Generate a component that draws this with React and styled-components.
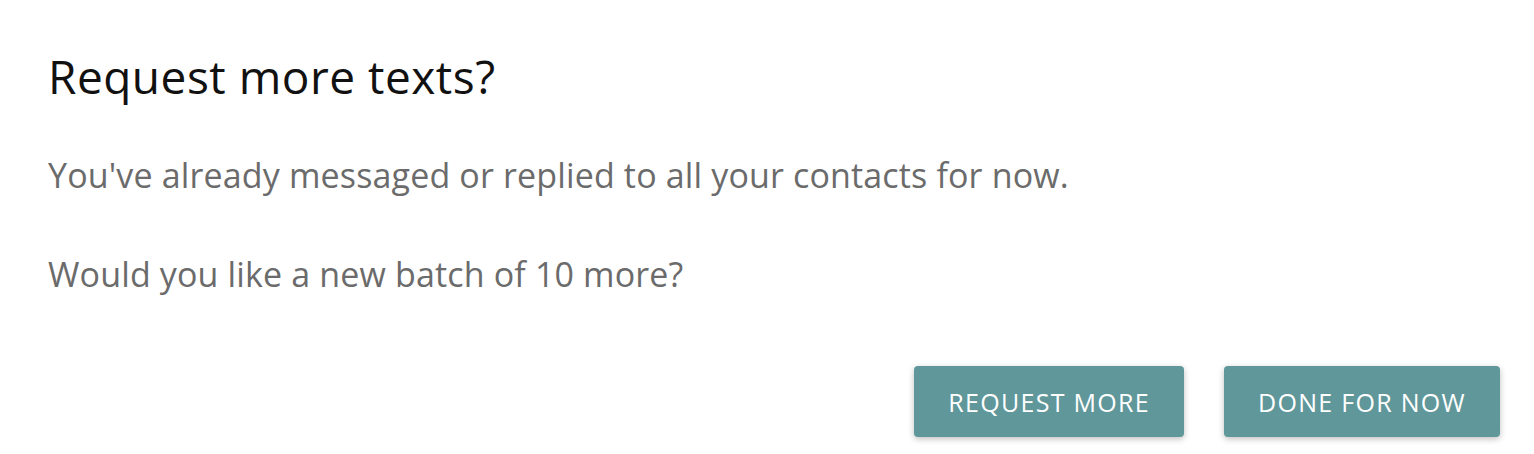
import React from "react";
import styled, { createGlobalStyle } from "styled-components";

const GlobalStyle = createGlobalStyle`
  html, body {
    margin: 0;
    padding: 0;
    background: #ffffff;
  }
  body {
    font-family: "Open Sans", "Liberation Sans", sans-serif;
  }
`;

export default function App() {
  return (
    <>
      <GlobalStyle />
      <Dialog>
        <Title>Request more texts?</Title>
        <Body>
          <Text>You've already messaged or replied to all your contacts for now.</Text>
          <Text>Would you like a new batch of 10 more?</Text>
        </Body>
        <Actions>
          <Button>Request more</Button>
          <Button>Done for now</Button>
        </Actions>
      </Dialog>
    </>
  );
}

/*===================== Styles =====================*/
const Dialog = styled.div`
  box-sizing: border-box;
  width: 1534px;
  height: 454px;
  background: #fff;
  border-radius: 8px;
  display: flex;
  flex-direction: column;
  padding: 46px 34px 0 48px;
`;

const Title = styled.h2`
  margin: 0;
  font-size: 46px;
  font-weight: 400;
  letter-spacing: 0.5px;
  line-height: 60px;
  color: #111;
`;

const Body = styled.div`
  display: flex;
  flex-direction: column;
  gap: 49px;
  margin-top: 44px;
`;

const Text = styled.p`
  margin: 0;
  font-size: 34px;
  letter-spacing: 0.15px;
  line-height: 50px;
  color: #6b6b6b;
`;

const Actions = styled.div`
  display: flex;
  justify-content: flex-end;
  gap: 40px;
  margin-top: auto;
  margin-bottom: 17px;
`;

const Button = styled.button`
  height: 71px;
  padding: 0 34px;
  border: none;
  border-radius: 4px;
  background: #5f979a;
  color: #fff;
  font-family: inherit;
  font-size: 25px;
  letter-spacing: 1.3px;
  text-transform: uppercase;
  box-shadow: 0 2px 6px rgba(0, 0, 0, 0.25);
  cursor: pointer;
`;
